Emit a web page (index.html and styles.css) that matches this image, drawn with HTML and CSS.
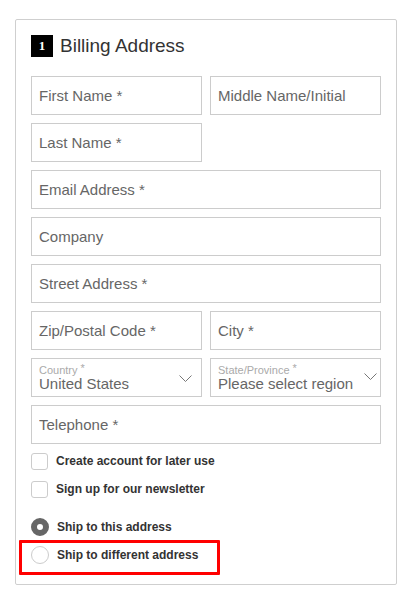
FILE: index.html
```html
<!DOCTYPE html>
<html lang="en">
<head>
    <meta charset="UTF-8">
    <meta name="viewport" content="width=device-width, initial-scale=1.0">
    <link rel="stylesheet" href="styles.css">
    <title>Billing Address</title>
</head>
<body>
    <div class="checkout-block">
        <h3 class="block-heading"><span class="step">1</span>Billing Address</h3>
        <form class="address-form">
            <input type="text" class="field" placeholder="First Name *">
            <input type="text" class="field" placeholder="Middle Name/Initial">
            <input type="text" class="field" placeholder="Last Name *">
            <div></div>
            <input type="email" class="field wide" placeholder="Email Address *">
            <input type="text" class="field wide" placeholder="Company">
            <input type="text" class="field wide" placeholder="Street Address *">
            <input type="text" class="field" placeholder="Zip/Postal Code *">
            <input type="text" class="field" placeholder="City *">
            <div class="field select">
                <div class="select-text">
                    <span class="select-label">Country <span class="req">*</span></span>
                    <span class="select-value">United States</span>
                </div>
                <svg class="chevron" width="13" height="8" viewBox="0 0 13 8"><polyline points="0.5,0.5 6.5,6.5 12.5,0.5" fill="none" stroke="#777" stroke-width="1"/></svg>
            </div>
            <div class="field select select-tight">
                <div class="select-text">
                    <span class="select-label">State/Province <span class="req">*</span></span>
                    <span class="select-value">Please select region</span>
                </div>
                <svg class="chevron" width="13" height="8" viewBox="0 0 13 8"><polyline points="0.5,0.5 6.5,6.5 12.5,0.5" fill="none" stroke="#777" stroke-width="1"/></svg>
            </div>
            <input type="tel" class="field wide" placeholder="Telephone *">
        </form>

        <div class="options">
            <label class="option"><input type="checkbox" class="box">Create account for later use</label>
            <label class="option"><input type="checkbox" class="box">Sign up for our newsletter</label>
        </div>

        <div class="options ship">
            <label class="option"><input type="radio" name="ship" class="round" checked>Ship to this address</label>
            <label class="option"><input type="radio" name="ship" class="round">Ship to different address<span class="highlight"></span></label>
        </div>
    </div>
</body>
</html>
```

FILE: styles.css
```css
*{
    box-sizing: border-box;
}

body{
    margin: 0;
    background-color: #fff;
    font-family: "Liberation Sans", Arial, sans-serif;
    color: #333;
}

.checkout-block{
    margin: 19px 8px 0 15px;
    padding: 15px 15px 15px;
    border: 1px solid #cfcfcf;
    border-radius: 2px;
}

.block-heading{
    display: flex;
    align-items: center;
    gap: 7px;
    height: 22px;
    margin: 0 0 19px;
    font-size: 19px;
    font-weight: normal;
    color: #333;
}

.step{
    display: flex;
    align-items: center;
    justify-content: center;
    width: 22px;
    height: 22px;
    background-color: #000;
    color: #fff;
    font-family: "Liberation Serif", serif;
    font-size: 13px;
    font-weight: bold;
}

.address-form{
    display: grid;
    grid-template-columns: 1fr 1fr;
    grid-auto-rows: 39px;
    gap: 8px;
}

.field{
    display: block;
    width: 100%;
    height: 39px;
    margin: 0;
    padding: 0 7px;
    border: 1px solid #ccc;
    border-radius: 0;
    background: #fff;
    font-family: inherit;
    font-size: 15px;
    color: #666;
    outline: none;
}

.field::placeholder{
    color: #666;
    opacity: 1;
}

.wide{
    grid-column: span 2;
}

.select{
    display: flex;
    align-items: center;
    justify-content: space-between;
    padding: 3px 9px 0 7px;
}

.select-tight{
    padding-right: 3px;
}

.select-tight .chevron{
    margin-top: -4px;
}

.select-text{
    display: flex;
    flex-direction: column;
    align-self: flex-start;
}

.select-label{
    font-size: 11px;
    line-height: 12px;
    color: #aaa;
}

.req{
    font-size: 11px;
    vertical-align: 2px;
}

.select-value{
    font-size: 15px;
    line-height: 16px;
    color: #666;
    white-space: nowrap;
}

.chevron{
    flex: none;
}

.options{
    margin-top: 3px;
}

.ship{
    margin-top: 10px;
}

.option{
    position: relative;
    display: flex;
    align-items: center;
    gap: 8px;
    height: 28px;
    font-size: 12px;
    font-weight: bold;
    color: #333;
}

.box, .round{
    appearance: none;
    -webkit-appearance: none;
    flex: none;
    width: 17px;
    height: 17px;
    margin: 0;
    border: 1px solid #ccc;
    border-radius: 3px;
    background: #fff;
}

.round{
    width: 18px;
    height: 18px;
    border-radius: 50%;
}

.round:checked{
    border: 6px solid #666;
}

.highlight{
    position: absolute;
    left: -12px;
    top: -1px;
    width: 201px;
    height: 35px;
    border: 3px solid #f00;
    border-radius: 1px;
}
```
